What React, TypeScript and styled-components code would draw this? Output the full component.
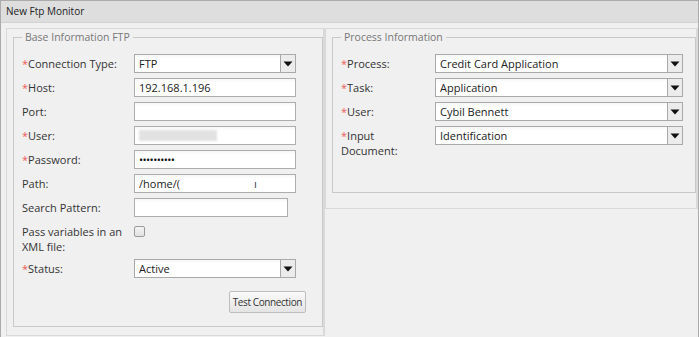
import React from 'react';
import styled, { createGlobalStyle } from 'styled-components';

const GlobalStyle = createGlobalStyle`
  html, body {
    margin: 0;
    padding: 0;
    background: #ffffff;
  }
  body {
    font-family: "Open Sans", "Liberation Sans", sans-serif;
    font-size: 11px;
    color: #333333;
  }
`;

const ChevronIcon = () => (
  <svg width="10" height="6" viewBox="0 0 10 6">
    <path d="M0.5 0.5 L9.5 0.5 L5 5.5 Z" fill="#111" />
  </svg>
);

interface SelectProps {
  value: string;
  width: number;
}

const Select = ({ value, width }: SelectProps) => (
  <SelectBox style={{ width }}>
    <SelectValue>{value}</SelectValue>
    <SelectButton>
      <ChevronIcon />
    </SelectButton>
  </SelectBox>
);

const Required = () => <Star>*</Star>;

export default function App() {
  return (
    <>
      <GlobalStyle />
      <Window>
        <Header>New Ftp Monitor</Header>
        <Body>
          <Column $width={319} $bottom={8}>
            <Group $padBottom={13}>
              <Legend>Base Information FTP</Legend>
              <Row>
                <Label $width={112}>
                  <Required />
                  Connection Type:
                </Label>
                <Select value="FTP" width={162} />
              </Row>
              <Row>
                <Label $width={112}>
                  <Required />
                  Host:
                </Label>
                <TextInput $width={162}>192.168.1.196</TextInput>
              </Row>
              <Row>
                <Label $width={112}>Port:</Label>
                <TextInput $width={162} />
              </Row>
              <Row>
                <Label $width={112}>
                  <Required />
                  User:
                </Label>
                <TextInput $width={162}>
                  <Blur $width={78} $tone="#e2e2e2" />
                </TextInput>
              </Row>
              <Row>
                <Label $width={112}>
                  <Required />
                  Password:
                </Label>
                <TextInput $width={162}>
                  <Dots>••••••••••</Dots>
                </TextInput>
              </Row>
              <Row>
                <Label $width={112}>Path:</Label>
                <TextInput $width={162}>
                  /home/(
                  <Blur $width={74} $tone="#ffffff" />
                  ı
                </TextInput>
              </Row>
              <Row>
                <Label $width={112}>Search Pattern:</Label>
                <TextInput $width={154} />
              </Row>
              <Row>
                <Label $width={112}>
                  Pass variables in an
                  <br />
                  XML file:
                </Label>
                <Checkbox />
              </Row>
              <Row>
                <Label $width={112}>
                  <Required />
                  Status:
                </Label>
                <Select value="Active" width={162} />
              </Row>
              <Actions>
                <Button>Test Connection</Button>
              </Actions>
            </Group>
          </Column>
          <Column $bottom={15}>
            <Group $padBottom={34}>
              <Legend>Process Information</Legend>
              <Row>
                <Label $width={94}>
                  <Required />
                  Process:
                </Label>
                <Select value="Credit Card Application" width={248} />
              </Row>
              <Row>
                <Label $width={94}>
                  <Required />
                  Task:
                </Label>
                <Select value="Application" width={248} />
              </Row>
              <Row>
                <Label $width={94}>
                  <Required />
                  User:
                </Label>
                <Select value="Cybil Bennett" width={248} />
              </Row>
              <Row>
                <Label $width={94}>
                  <Required />
                  Input
                  <br />
                  Document:
                </Label>
                <Select value="Identification" width={248} />
              </Row>
            </Group>
          </Column>
        </Body>
      </Window>
    </>
  );
}

const Window = styled.div`
  width: 699px;
  height: 337px;
  box-sizing: border-box;
  border: 1px solid #ababab;
  border-bottom: none;
  background: #f0f0f0;
  overflow: hidden;
  display: flex;
  flex-direction: column;
`;

const Header = styled.div`
  height: 21px;
  line-height: 21px;
  padding-left: 5px;
  background: #dedede;
  border-bottom: 1px solid #d2d2d2;
  font-size: 10px;
  color: #222;
`;

const Body = styled.div`
  display: flex;
  align-items: flex-start;
  padding: 5px 0 0 5px;
`;

const Column = styled.div<{ $width?: number; $bottom: number }>`
  ${({ $width }) => ($width ? `width: ${$width}px;` : 'flex: 1;')}
  box-sizing: border-box;
  border: 1px solid #d9d9d9;
  border-right-width: 2px;
  padding: 1px 0 ${({ $bottom }) => $bottom}px 6px;
  min-width: 0;
`;

const Group = styled.fieldset<{ $padBottom: number }>`
  margin: 0;
  border: 1px solid #c9c9c9;
  padding: 9px 0 ${({ $padBottom }) => $padBottom}px 8px;
  display: flex;
  flex-direction: column;
  gap: 5px;
  min-width: 0;
`;

const Legend = styled.legend`
  margin-left: 0;
  padding: 0 3px;
  line-height: 15px;
  color: #777;
  font-size: 10.5px;
`;

const Row = styled.div`
  display: flex;
  align-items: flex-start;
`;

const Label = styled.div<{ $width: number }>`
  width: ${({ $width }) => $width}px;
  flex-shrink: 0;
  padding-top: 2px;
  line-height: 15px;
  color: #333;
`;

const Star = styled.span`
  color: #ee5a5a;
`;

const TextInput = styled.div<{ $width: number }>`
  width: ${({ $width }) => $width}px;
  height: 19px;
  box-sizing: border-box;
  border: 1px solid #adadad;
  background: linear-gradient(#f7f7f7, #ffffff 4px);
  padding: 0 4px;
  display: flex;
  align-items: center;
  line-height: 17px;
  color: #222;
  white-space: nowrap;
  overflow: hidden;
`;

const Blur = styled.span<{ $width: number; $tone: string }>`
  display: inline-block;
  width: ${({ $width }) => $width}px;
  height: 11px;
  background: ${({ $tone }) => $tone};
  filter: blur(1px);
`;

const Dots = styled.span`
  font-size: 11px;
  letter-spacing: -0.6px;
  color: #111;
`;

const SelectBox = styled.div`
  height: 19px;
  box-sizing: border-box;
  border: 1px solid #a9a9a9;
  background: linear-gradient(#f7f7f7, #ffffff 4px);
  display: flex;
`;

const SelectValue = styled.div`
  flex: 1;
  padding: 0 4px;
  line-height: 17px;
  color: #222;
  white-space: nowrap;
  overflow: hidden;
`;

const SelectButton = styled.div`
  width: 14px;
  border-left: 1px solid #a9a9a9;
  background: #ececec;
  display: flex;
  align-items: center;
  justify-content: center;
`;

const Checkbox = styled.div`
  width: 11px;
  height: 11px;
  margin-top: 4px;
  box-sizing: border-box;
  border: 1px solid #9a9a9a;
  border-radius: 2px;
  background: linear-gradient(#f4f4f4, #e2e2e2);
`;

const Actions = styled.div`
  display: flex;
  justify-content: flex-end;
  padding: 8px 16px 0 0;
`;

const Button = styled.div`
  height: 22px;
  box-sizing: border-box;
  padding: 0 3px;
  border: 1px solid #bdbdbd;
  border-radius: 2px;
  background: linear-gradient(#fafafa, #e4e4e4);
  line-height: 20px;
  color: #333;
  font-size: 10px;
  letter-spacing: -0.4px;
`;
